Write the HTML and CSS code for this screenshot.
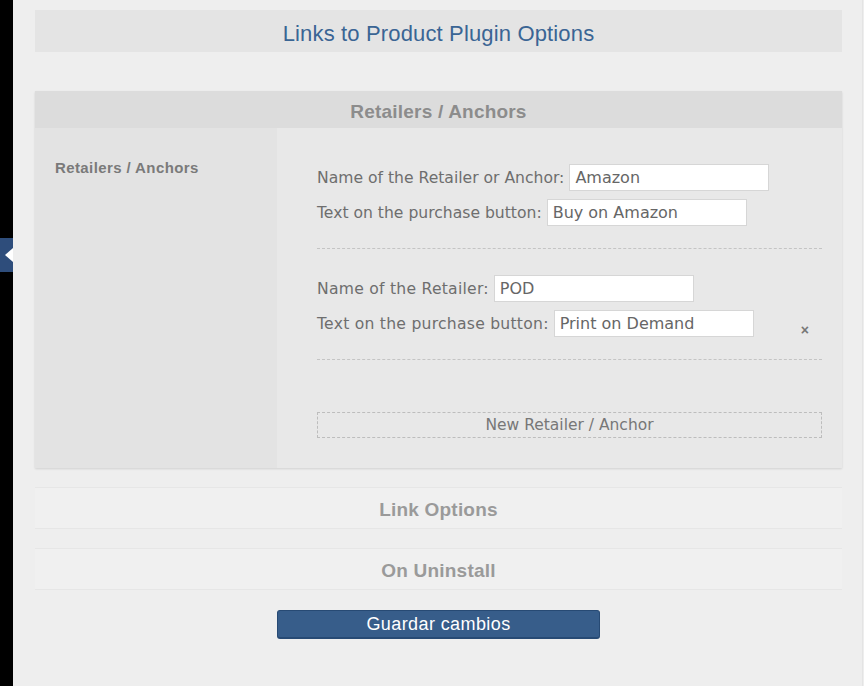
FILE: index.html
```html
<!DOCTYPE html>
<html>
<head>
<meta charset="utf-8">
<link rel="stylesheet" href="styles.css">
</head>
<body>
<div class="frame">
  <div class="sidebar">
    <div class="tab"><span class="tri"></span></div>
  </div>
  <main class="main">
    <h1 class="title">Links to Product Plugin Options</h1>

    <section class="panel open">
      <h2 class="panel-head">Retailers / Anchors</h2>
      <div class="panel-body">
        <div class="side-label">Retailers / Anchors</div>
        <div class="fields">
          <div class="entry">
            <div class="row"><label>Name of the Retailer or Anchor:</label><input class="inp" type="text" value="Amazon"></div>
            <div class="row"><label>Text on the purchase button:</label><input class="inp" type="text" value="Buy on Amazon"></div>
          </div>
          <div class="entry entry-wide">
            <div class="row"><label>Name of the Retailer:</label><input class="inp" type="text" value="POD"></div>
            <div class="row"><label>Text on the purchase button:</label><input class="inp" type="text" value="Print on Demand"><span class="remove">×</span></div>
          </div>
          <div class="new-btn">New Retailer / Anchor</div>
        </div>
      </div>
    </section>

    <section class="panel closed"><h2 class="panel-head">Link Options</h2></section>
    <section class="panel closed"><h2 class="panel-head">On Uninstall</h2></section>

    <div class="actions"><button class="save">Guardar cambios</button></div>
  </main>
  <div class="edge"></div>
</div>
</body>
</html>
```

FILE: styles.css
```css
* { box-sizing: border-box; }
html, body { margin: 0; padding: 0; }
body {
  background: #eeeeee;
  font-family: "Liberation Sans", Arial, sans-serif;
  width: 864px;
  height: 686px;
  overflow: hidden;
}
.frame {
  display: flex;
  height: 686px;
}
.sidebar {
  width: 13px;
  flex: none;
  background: #000;
  padding-top: 238px;
}
.tab {
  width: 13px;
  height: 34px;
  background: #2e4d7b;
  display: flex;
  align-items: center;
}
.tri {
  display: block;
  width: 0;
  height: 0;
  margin-left: 5px;
  border-top: 7px solid transparent;
  border-bottom: 7px solid transparent;
  border-right: 8px solid #fff;
}
.main {
  flex: none;
  width: 807px;
  margin-left: 22px;
  padding-top: 10px;
}
.edge {
  flex: none;
  width: 1px;
  margin-left: 20px;
  background: #e4e4e4;
}
.title {
  margin: 0;
  height: 42px;
  background: #e4e4e4;
  color: #3a6594;
  font-weight: normal;
  font-size: 22px;
  line-height: 47px;
  text-align: center;
  letter-spacing: 0.15px;
}
.panel-head {
  margin: 0;
  text-align: center;
  font-size: 19px;
  font-weight: bold;
  letter-spacing: 0.2px;
  color: #8c8c8c;
}
.panel.open {
  margin-top: 39px;
  box-shadow: 0 1px 2px rgba(0,0,0,0.12);
}
.panel.open .panel-head {
  height: 37px;
  line-height: 42px;
  background: #dcdcdc;
}
.panel-body {
  display: flex;
  height: 340px;
}
.side-label {
  width: 242px;
  background: #e3e3e3;
  padding: 31px 20px 0;
  font-size: 15px;
  font-weight: bold;
  letter-spacing: 0.4px;
  color: #7a7a7a;
}
.fields {
  flex: 1;
  background: #e8e8e8;
  padding: 36px 20px 0 40px;
}
.entry {
  border-bottom: 1px dashed #c4c4c4;
  padding-bottom: 22px;
  margin-bottom: 26px;
}
.row {
  display: flex;
  align-items: center;
  height: 27px;
  margin-bottom: 8px;
  font-family: "DejaVu Sans", sans-serif;
  font-size: 15.6px;
  color: #6e6e6e;
  position: relative;
}
.row:last-child { margin-bottom: 0; }
.row label { margin-right: 5px; white-space: nowrap; }
.entry-wide .row label { letter-spacing: 0.25px; }
.inp {
  width: 200px;
  height: 27px;
  border: 1px solid #d6d6d6;
  background: #fff;
  padding: 0 5px;
  font-family: "DejaVu Sans", sans-serif;
  font-size: 16px;
  color: #666;
  outline: none;
  margin: 0;
}
.remove {
  position: absolute;
  right: 13px;
  top: 13px;
  font-family: "Liberation Sans", Arial, sans-serif;
  font-size: 14px;
  font-weight: bold;
  color: #777;
  line-height: 14px;
}
.new-btn {
  margin-top: 52px;
  height: 26px;
  border: 1px dashed #bdbdbd;
  text-align: center;
  font-family: "DejaVu Sans", sans-serif;
  font-size: 15.5px;
  line-height: 25px;
  color: #777;
}
.panel.closed {
  margin-top: 19px;
  background: #f0f0f0;
  border-top: 1px solid #e6e6e6;
  border-bottom: 1px solid #e6e6e6;
}
.panel.closed .panel-head {
  height: 40px;
  line-height: 43px;
  color: #9a9a9a;
}
.actions {
  display: flex;
  justify-content: flex-start;
  padding-left: 242px;
  margin-top: 20px;
}
.save {
  width: 323px;
  height: 29px;
  background: #375d8a;
  border: 1px solid #274a74;
  border-bottom-width: 2px;
  border-radius: 3px;
  color: #fff;
  font-family: "Liberation Sans", Arial, sans-serif;
  font-size: 18px;
  letter-spacing: 0.4px;
  padding: 0;
  line-height: 26px;
}
```
